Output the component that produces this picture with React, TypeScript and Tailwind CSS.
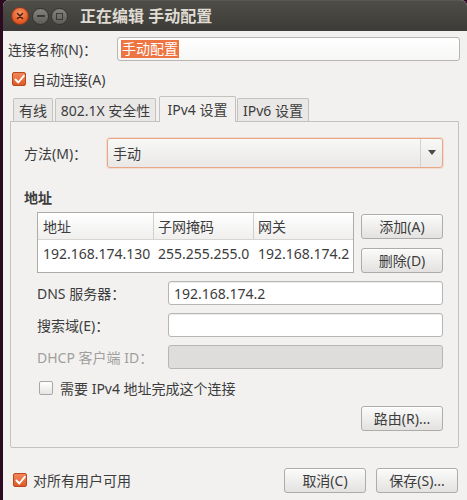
import React from "react";

const font = { fontFamily: '"Noto Sans", "Noto Sans CJK SC", sans-serif' };

function Check({ checked }: { checked: boolean }) {
  if (checked) {
    return (
      <span className="flex h-[14px] w-[14px] items-center justify-center rounded-[2px] border border-[#b9491c] bg-gradient-to-b from-[#f2875a] to-[#dd5a26]">
        <svg width="11" height="11" viewBox="0 0 11 11">
          <path d="M1.5 5.5 L4.3 8.5 L9.8 1.8" fill="none" stroke="#fff" strokeWidth="1.9" strokeLinecap="round" strokeLinejoin="round" />
        </svg>
      </span>
    );
  }
  return <span className="h-[14px] w-[14px] rounded-[2px] border border-[#aaa7a2] bg-gradient-to-b from-white to-[#e6e5e3]" />;
}

function Btn({ label, w = "w-[82px]" }: { label: string; w?: string }) {
  return (
    <button className={`${w} flex h-[25px] items-center justify-center rounded-[3px] border border-[#aeaca8] bg-gradient-to-b from-[#fbfbfb] to-[#e3e2e0] text-[14px] text-[#3c3c3c] shadow-[inset_0_1px_0_#fff]`}>
      {label}
    </button>
  );
}

function Field({ value, disabled }: { value?: string; disabled?: boolean }) {
  return (
    <div
      className={`flex h-[24px] flex-1 items-center rounded-[3px] border border-[#b8b6b2] px-[5px] text-[14px] text-[#3c3c3c] ${
        disabled ? "bg-[#dedddb]" : "bg-white shadow-[inset_0_1px_1px_rgba(0,0,0,0.08)]"
      }`}
    >
      {value}
    </div>
  );
}

export default function App() {
  return (
    <div className="h-[500px] w-[467px] overflow-hidden bg-[#2c0a21]" style={font}>
      <div className="ml-[3px] h-[500px] w-[464px] overflow-hidden rounded-t-[6px] bg-[#f2f1f0]">
        {/* Title bar */}
        <div className="flex h-[31px] items-center border-t border-[#5a584f] bg-gradient-to-b from-[#4e4d47] to-[#3c3b37] pl-[8px]">
          <span className="flex h-[18px] w-[18px] items-center justify-center rounded-full border border-[#8a3a1a] bg-[radial-gradient(circle_at_50%_35%,#f79a6a,#e0541f_70%)]">
            <svg width="8" height="8" viewBox="0 0 8 8">
              <path d="M1.5 1.5 L6.5 6.5 M6.5 1.5 L1.5 6.5" stroke="#4a1c0a" strokeWidth="1.5" strokeLinecap="round" />
            </svg>
          </span>
          <span className="ml-[3px] flex h-[17px] w-[17px] items-center justify-center rounded-full border border-[#35342f] bg-gradient-to-b from-[#85847d] to-[#5e5d57]">
            <span className="h-[2px] w-[8px] bg-[#3a3934]" />
          </span>
          <span className="ml-[2px] flex h-[17px] w-[17px] items-center justify-center rounded-full border border-[#35342f] bg-gradient-to-b from-[#85847d] to-[#5e5d57]">
            <span className="h-[7px] w-[7px] border border-[#3a3934]" />
          </span>
          <span className="ml-[12px] text-[16px] font-bold text-[#dfdbd2]">正在编辑 手动配置</span>
        </div>

        <div className="pl-[5px] pr-[7px] text-[14px] text-[#3c3c3c]">
          {/* Connection name */}
          <div className="mt-[6px] flex h-[24px] items-center">
            <span className="w-[109px]">连接名称(N)：</span>
            <div className="flex h-[24px] flex-1 items-center rounded-[3px] border border-[#b8b6b2] bg-gradient-to-b from-white to-[#f6f6f5] px-[3px]">
              <span className="bg-[#ee7441] px-[1px] leading-[18px] text-white">手动配置</span>
            </div>
          </div>

          {/* Auto connect */}
          <div className="mt-[9px] flex h-[18px] items-center gap-[6px] pl-[4px]">
            <Check checked />
            <span>自动连接(A)</span>
          </div>

          {/* Tabs */}
          <div className="mt-[8px] flex h-[25px] items-end pl-[5px]">
            <div className="flex h-[23px] w-[40px] items-center justify-center rounded-t-[2px] border border-b-0 border-[#c4c2be] bg-[#e9e8e6]">有线</div>
            <div className="ml-[2px] flex h-[23px] w-[101px] items-center justify-center rounded-t-[2px] border border-b-0 border-[#c4c2be] bg-[#e9e8e6]">802.1X 安全性</div>
            <div className="relative z-10 ml-[3px] -mb-px flex h-[26px] w-[77px] items-center justify-center rounded-t-[2px] border border-b-0 border-[#c4c2be] bg-[#f2f1f0]">IPv4 设置</div>
            <div className="ml-[1px] flex h-[23px] w-[72px] items-center justify-center rounded-t-[2px] border border-b-0 border-[#c4c2be] bg-[#e9e8e6]">IPv6 设置</div>
          </div>

          {/* Panel */}
          <div className="ml-[2px] mr-[1px] rounded-b-[2px] border border-[#c4c2be] pb-[16px] pl-[13px] pr-[15px] pt-[16px]">
            <div className="flex h-[30px] items-center">
              <span className="w-[83px]">方法(M)：</span>
              <div className="flex h-[30px] flex-1 items-center rounded-[3px] border border-[#e8a787] bg-gradient-to-b from-[#f8f8f7] to-[#e9e8e6] shadow-[0_0_0_1px_rgba(240,160,120,0.25)]">
                <span className="flex-1 pl-[5px]">手动</span>
                <span className="h-[28px] w-px bg-[#d3d1cd]" />
                <span className="flex w-[21px] justify-center">
                  <svg width="8" height="6" viewBox="0 0 8 6">
                    <path d="M0 0 L8 0 L4 5 Z" fill="#4a4a48" />
                  </svg>
                </span>
              </div>
            </div>

            <div className="mt-[20px] h-[20px] font-bold leading-[20px]">地址</div>

            <div className="mt-[4px] flex pl-[13px]">
              <div className="h-[61px] w-[317px] border border-[#aeaca8] bg-white">
                <div className="flex h-[27px] items-center border-b border-[#d6d5d2] bg-gradient-to-b from-white to-[#f0efee]">
                  <span className="flex h-full w-[116px] items-center border-r border-[#d0cfcc] pl-[5px]">地址</span>
                  <span className="flex h-full w-[100px] items-center border-r border-[#d0cfcc] pl-[4px]">子网掩码</span>
                  <span className="flex h-full flex-1 items-center pl-[4px]">网关</span>
                </div>
                <div className="flex h-[26px] items-center">
                  <span className="w-[116px] pl-[5px]">192.168.174.130</span>
                  <span className="w-[100px] pl-[4px]">255.255.255.0</span>
                  <span className="flex-1 pl-[4px]">192.168.174.2</span>
                </div>
              </div>
              <div className="ml-auto flex flex-col pt-[2px]">
                <Btn label="添加(A)" />
                <div className="mt-[9px]">
                  <Btn label="删除(D)" />
                </div>
              </div>
            </div>

            <div className="mt-[8px] flex flex-col gap-[8px] pl-[13px]">
              <div className="flex h-[24px] items-center">
                <span className="w-[131px]">DNS 服务器：</span>
                <Field value="192.168.174.2" />
              </div>
              <div className="flex h-[24px] items-center">
                <span className="w-[131px]">搜索域(E)：</span>
                <Field />
              </div>
              <div className="flex h-[24px] items-center">
                <span className="w-[131px] text-[#a09f9c]">DHCP 客户端 ID：</span>
                <Field disabled />
              </div>
            </div>

            <div className="mt-[9px] flex h-[20px] items-center gap-[7px] pl-[15px]">
              <Check checked={false} />
              <span>需要 IPv4 地址完成这个连接</span>
            </div>

            <div className="mt-[8px] flex justify-end">
              <Btn label="路由(R)..." />
            </div>
          </div>

          {/* Bottom row */}
          <div className="mt-[19px] flex h-[26px] items-center">
            <div className="flex items-center gap-[6px] pl-[5px]">
              <Check checked />
              <span>对所有用户可用</span>
            </div>
            <div className="ml-auto flex gap-[10px] pr-[2px]">
              <Btn label="取消(C)" />
              <Btn label="保存(S)..." />
            </div>
          </div>
        </div>
      </div>
    </div>
  );
}
